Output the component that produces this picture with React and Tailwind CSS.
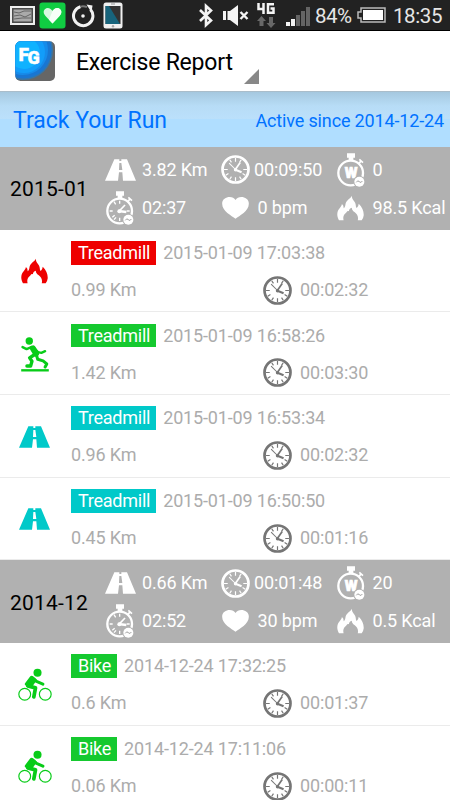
const months = [
  {
    month: "2015-01",
    distance: "3.82 Km",
    time: "00:09:50",
    watts: "0",
    pace: "02:37",
    heart: "0 bpm",
    calories: "98.5 Kcal",
    runs: [
      { icon: "flame", color: "red", type: "Treadmill", date: "2015-01-09 17:03:38", distance: "0.99 Km", time: "00:02:32" },
      { icon: "runner", color: "green", type: "Treadmill", date: "2015-01-09 16:58:26", distance: "1.42 Km", time: "00:03:30" },
      { icon: "road", color: "cyan", type: "Treadmill", date: "2015-01-09 16:53:34", distance: "0.96 Km", time: "00:02:32" },
      { icon: "road", color: "cyan", type: "Treadmill", date: "2015-01-09 16:50:50", distance: "0.45 Km", time: "00:01:16" },
    ],
  },
  {
    month: "2014-12",
    distance: "0.66 Km",
    time: "00:01:48",
    watts: "20",
    pace: "02:52",
    heart: "30 bpm",
    calories: "0.5 Kcal",
    runs: [
      { icon: "bike", color: "green", type: "Bike", date: "2014-12-24 17:32:25", distance: "0.6 Km", time: "00:01:37" },
      { icon: "bike", color: "green", type: "Bike", date: "2014-12-24 17:11:06", distance: "0.06 Km", time: "00:00:11" },
    ],
  },
];

const badgeColors = {
  red: "bg-[#ee0000]",
  green: "bg-[#15c92f]",
  cyan: "bg-[#00c9c9]",
};

const iconColors = {
  red: "text-[#ee0000]",
  green: "text-[#08cc18]",
  cyan: "text-[#00c9c9]",
};

/* ================= ICONS ================= */
function RoadIcon() {
  return (
    <svg width="31" height="22" viewBox="0 0 93 66" fill="currentColor">
      <path d="M28 1H43V6H49V1H66L93 65H54L52 40H42L39 65H0Z M43 12H49L52 33H42Z" fillRule="evenodd" />
    </svg>
  );
}

function FlameIcon() {
  return (
    <svg width="27" height="26" viewBox="62 92 82 76" fill="currentColor">
      <path d="M107 93C107 107 119 110 119 122Q119 128 122 130Q127 127 128 117C139 128 144 140 143 153Q142 162 137 167H125C128 157 123 148 116 143C109 138 107 134 107 129C101 130 99 134 98 140C92 137 93 143 88 146C81 152 80 160 82 167H68C62 157 61 145 66 136C72 128 76 125 77 118Q83 123 82 131C90 126 85 116 93 108C99 101 104 100 107 93Z" />
    </svg>
  );
}

function RunnerIcon() {
  return (
    <svg width="28" height="35" viewBox="62 325 82 104" fill="none" stroke="currentColor" strokeLinejoin="round" strokeLinecap="round">
      <circle cx="86" cy="337" r="11" fill="currentColor" stroke="none" />
      <path d="M66 355L78 361L92 355" strokeWidth="7" />
      <path d="M99 357L112 370L122 372L133 367" strokeWidth="7" />
      <path d="M97 359L106 374" strokeWidth="18" />
      <path d="M102 377L87 387L94 397L90 411H79" strokeWidth="10" />
      <path d="M108 381L111 391L127 396L138 405L133 414" strokeWidth="9" />
      <path d="M62 424H144" strokeWidth="7" strokeLinecap="butt" />
    </svg>
  );
}

function BikeIcon() {
  return (
    <svg width="34" height="34" viewBox="53 84 101 101" fill="none" stroke="currentColor" strokeLinejoin="round" strokeLinecap="round">
      <circle cx="73" cy="162" r="17.5" strokeWidth="3.5" />
      <circle cx="134" cy="162" r="17.5" strokeWidth="3.5" />
      <circle cx="111" cy="98" r="12" fill="currentColor" stroke="none" />
      <path d="M96 113L108 124L127 132" strokeWidth="9" />
      <path d="M78 132L93 112L103 120L92 135Z" fill="currentColor" strokeWidth="10" />
      <path d="M82 137L105 143L100 170" strokeWidth="11" />
    </svg>
  );
}

function ClockIcon() {
  return (
    <svg width="29" height="29" viewBox="0 0 86 86" fill="none" stroke="currentColor">
      <circle cx="43" cy="43" r="38.5" strokeWidth="8" />
      <path d="M43 9V20M43 66V77M9 43H20M66 43H77M26 14L31 22M60 14L55 22M14 60L22 55M72 60L64 55M26 72L31 64M60 72L55 64" strokeWidth="3.5" />
      <path d="M24 24L43 43" strokeWidth="3" />
      <path d="M41 45L57 22" strokeWidth="5" />
      <path d="M41 43L61 51" strokeWidth="6" />
      <circle cx="43" cy="44" r="5" fill="currentColor" stroke="none" />
    </svg>
  );
}

function StopwatchIcon({ watts }) {
  return (
    <svg width="28" height="34" viewBox="0 0 84 102" fill="none" stroke="currentColor">
      <path d="M30 1H54V14H49V24H35V14H30Z" fill="currentColor" stroke="none" />
      <path d="M66 31L73 23M67 19L78 29" strokeWidth="5" />
      <circle cx="41" cy="60" r="37" strokeWidth="7" />
      {watts ? (
        <text x="42" y="74" textAnchor="middle" fill="currentColor" stroke="currentColor" strokeWidth="2" fontFamily="Roboto, sans-serif" fontWeight="900" fontSize="44">
          W
        </text>
      ) : (
        <>
          <path d="M41 29V38M41 80V90M11 60H20M62 60H71M24 32L29 40M19 79L26 73M24 86L30 79" strokeWidth="4" />
          <path d="M38 62L57 42" strokeWidth="5" />
          <path d="M37 60L61 63" strokeWidth="7" />
          <circle cx="40" cy="61" r="6" fill="currentColor" stroke="none" />
        </>
      )}
      <circle cx="67" cy="86" r="18" fill="#b1b1b1" stroke="none" />
      <circle cx="67" cy="86" r="15" fill="currentColor" stroke="none" />
      <path d="M58 88Q62 80 67 86T76 84" stroke="#a0a0a0" strokeWidth="3" />
    </svg>
  );
}

function HeartIcon() {
  return (
    <svg width="27" height="22" viewBox="0 0 80 66" fill="currentColor">
      <path d="M40 65C28 56 0 42 0 20C0 -2 32 -6 40 9C48 -6 80 -2 80 20C80 42 52 56 40 65Z" />
    </svg>
  );
}

const rowIcons = { flame: FlameIcon, runner: RunnerIcon, road: RoadIcon, bike: BikeIcon };

/* ================= STATUS BAR ================= */
function StatusBar() {
  return (
    <div className="flex h-[31px] items-center border-b border-black bg-[#222222] text-[#e6e6e6]">
      <svg className="ml-[10px]" width="25" height="19" viewBox="0 0 25 19">
        <rect x="1" y="1" width="23" height="17" fill="#555" stroke="#eee" strokeWidth="2" />
        <rect x="3" y="3" width="19" height="13" fill="#aaa" stroke="#444" />
        <path d="M4 6L9 7L14 5L21 5M4 10L10 9L15 11L21 8M4 13L12 12L21 12" stroke="#666" fill="none" />
      </svg>
      <svg className="ml-[4px]" width="27" height="27" viewBox="0 0 27 27">
        <rect x="0.5" y="0.5" width="26" height="26" rx="3" fill="#10cc42" />
        <path d="M13.5 21.5L6.5 14C3 10 5 6.5 8.5 6C11 6 12.5 7.5 13.5 9C14.5 7.5 16 6 18.5 6C22 6.5 24 10 20.5 14Z" fill="#d9f8e0" />
        <path d="M13.5 9C14.5 7.5 16 6 18.5 6C22 6.5 24 10 20.5 14L13.5 21.5L10 17.7Z" fill="#f6fff8" />
      </svg>
      <svg className="ml-[5px] mt-[2px]" width="24" height="24" viewBox="0 0 24 24" fill="none" stroke="#f2f2f2">
        <path d="M19.5 5.5A9.7 9.7 0 1 1 9.5 2.6" strokeWidth="3" />
        <path d="M9.5 2.6A9.7 9.7 0 0 1 16 3.2" stroke="#777" strokeWidth="2" />
        <path d="M15.5 0.5L21.5 1.5L20.5 8.5Z" fill="#f2f2f2" stroke="none" />
        <circle cx="12" cy="12" r="1.8" fill="#f2f2f2" stroke="none" />
      </svg>
      <svg className="ml-[8px]" width="20" height="27" viewBox="0 0 20 27">
        <rect x="0.5" y="0.5" width="19" height="26" rx="2.5" fill="#f0f0f0" />
        <rect x="2.5" y="4" width="15" height="18" fill="#333" />
        <path d="M2.5 4H6L17 22H2.5Z" fill="#17647c" />
        <path d="M8 2H12" stroke="#999" />
        <circle cx="10" cy="24.3" r="1.2" fill="#aaa" />
      </svg>
      <svg className="ml-[75px]" width="16" height="25" viewBox="0 0 16 25" fill="none" stroke="#f4f4f4" strokeWidth="2.6">
        <path d="M2 7L13 17.5L8 22V3L13 7.5L2 18" />
      </svg>
      <svg className="ml-[9px]" width="26" height="23" viewBox="0 0 26 23" fill="#f4f4f4">
        <path d="M0 7H3V16H0ZM4.5 7H7L15 1V22L7 16H4.5Z" />
        <path d="M17.5 8L24.5 15M24.5 8L17.5 15" stroke="#f4f4f4" strokeWidth="2.4" />
      </svg>
      <svg className="ml-[8px] mt-px" width="19" height="27" viewBox="0 0 19 27">
        <path d="M1.5 1V7H7.5M6.5 1V12M17 2.2H11V10.8H16.5V6.5H13.5" fill="none" stroke="#f4f4f4" strokeWidth="2.5" />
        <path d="M4.5 14L9 19H6.5V24H2.5V19H0ZM14 26L9.5 21H12V15H16V21H18.5Z" fill="#686868" />
      </svg>
      <svg className="ml-[10px] mt-[2px]" width="25" height="20" viewBox="0 0 25 20">
        <path d="M0 16H4V20H0ZM5 13H9V20H5Z" fill="#f4f4f4" />
        <path d="M10 9H14V20H10ZM15 5H19V20H15ZM20 1H24V20H20Z" fill="#646464" />
      </svg>
      <span className="ml-[4px] mt-[3px] w-[42px] text-[20.5px] tracking-[-0.5px]">84%</span>
      <svg width="29" height="16" viewBox="0 0 29 16">
        <path d="M4 1H28V15H4V11H1V5H4Z" fill="none" stroke="#bbb" strokeWidth="1.5" />
        <rect x="6" y="3" width="20" height="10" fill="#fff" />
      </svg>
      <span className="ml-[7px] mt-[3px] text-[20.5px] tracking-[-0.4px]">18:35</span>
    </div>
  );
}

function TitleBar() {
  return (
    <div className="flex h-[60px] items-center bg-white">
      <svg className="ml-[15px]" width="41" height="41" viewBox="0 0 41 41">
        <defs>
          <clipPath id="logo">
            <rect x="0.5" y="0.5" width="39.5" height="39.5" rx="5" />
          </clipPath>
        </defs>
        <g clipPath="url(#logo)">
          <rect width="41" height="41" fill="#666" />
          <circle cx="8" cy="9" r="30" fill="#3875a5" />
          <circle cx="8" cy="9" r="28.5" fill="#1976d2" />
          <circle cx="8" cy="9" r="25" fill="#168bea" />
          <circle cx="9" cy="11" r="21" fill="#129dfa" />
          <circle cx="9" cy="12" r="16" fill="#10b2ff" />
        </g>
        <g fill="#fff" stroke="#fff" strokeWidth="0.4" fontFamily="Roboto, sans-serif" fontWeight="900">
          <text x="3.5" y="19.5" fontSize="19">F</text>
          <text x="12.5" y="23" fontSize="18">G</text>
        </g>
      </svg>
      <h1 className="ml-[20px] mt-[3px] text-[23px] font-normal tracking-[-0.2px] text-black">Exercise Report</h1>
      <svg className="ml-[11px] mt-[31px]" width="15" height="15" viewBox="0 0 15 15">
        <path d="M15 0V15H0Z" fill="#888" />
      </svg>
    </div>
  );
}

/* ================= MONTH SUMMARY ================= */
function MonthHeader({ data }) {
  return (
    <div className="flex h-[82.67px] items-center bg-[#b1b1b1] text-[18px] tracking-[-0.15px] text-white">
      <span className="w-[105px] pl-[10px] pt-[3px] text-[21px] tracking-[0.2px] text-black">{data.month}</span>
      <div className="grid flex-1 grid-cols-[116px_115px_1fr] grid-rows-[38px_38px] whitespace-nowrap pt-px">
        <div className="flex items-center">
          <span className="w-[37px]"><RoadIcon /></span>
          {data.distance}
        </div>
        <div className="flex items-center">
          <span className="w-[33px]"><ClockIcon /></span>
          {data.time}
        </div>
        <div className="flex items-center">
          <span className="w-[36.5px] pl-px"><StopwatchIcon watts /></span>
          {data.watts}
        </div>
        <div className="flex items-center">
          <span className="w-[37px] pl-[1px]"><StopwatchIcon /></span>
          {data.pace}
        </div>
        <div className="flex items-center">
          <span className="w-[36.5px] pl-px"><HeartIcon /></span>
          {data.heart}
        </div>
        <div className="flex items-center">
          <span className="w-[36.5px] pl-px"><FlameIcon /></span>
          {data.calories}
        </div>
      </div>
    </div>
  );
}

function RunRow({ run }) {
  const Icon = rowIcons[run.icon];

  return (
    <div className="flex h-[82.67px] border-b border-[#ebebeb] bg-white text-[18px] tracking-[-0.15px] text-[#acacac]">
      <div className={`flex w-[71px] items-center justify-center pr-[2px] pt-[2px] ${iconColors[run.color]}`}>
        <Icon />
      </div>
      <div className="flex-1 pt-[11.5px]">
        <div className="flex h-[23.5px] items-center">
          <span className={`flex h-[23.5px] items-center pl-[7px] pr-[6px] tracking-[-0.25px] text-white ${badgeColors[run.color]}`}>{run.type}</span>
          <span className="ml-[7px]">{run.date}</span>
        </div>
        <div className="mt-[11px] flex h-[29px] items-center">
          <span className="w-[192px]">{run.distance}</span>
          <span className="text-[#757575]"><ClockIcon /></span>
          <span className="ml-[8px]">{run.time}</span>
        </div>
      </div>
    </div>
  );
}

export default function App() {
  return (
    <div className="h-[800px] w-[450px] overflow-hidden bg-white font-['Roboto',sans-serif] font-normal leading-none [&_svg]:block [&_svg]:shrink-0">
      <StatusBar />
      <TitleBar />
      <div className="flex h-[56px] items-center justify-between border-t border-[#aabdca] bg-[linear-gradient(#a5c8df_0%,#b7dcf6_25%,#bbe0fb_49%,#b0deff_50%,#b0deff_100%)] pl-[13px] pr-[6px] pt-[2px] text-[#0072ff]">
        <span className="text-[23px]">Track Your Run</span>
        <span className="text-[18px] tracking-[-0.15px]">Active since 2014-12-24</span>
      </div>
      {months.map((m) => (
        <div key={m.month}>
          <MonthHeader data={m} />
          {m.runs.map((run) => (
            <RunRow key={run.date} run={run} />
          ))}
        </div>
      ))}
    </div>
  );
}
